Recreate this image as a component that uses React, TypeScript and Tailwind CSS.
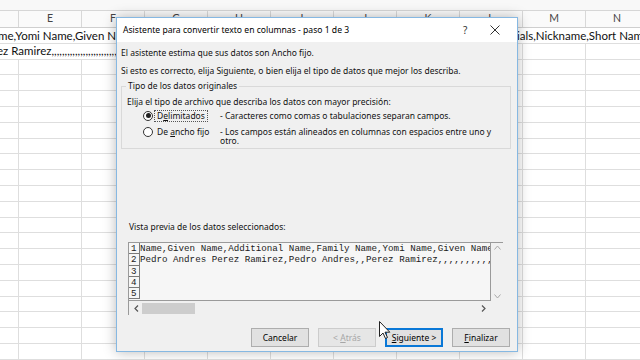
import React from "react";

const cols = ["D", "E", "F", "G", "H", "I", "J", "K", "L", "M", "N"];
const colW = [19, 63, 63, 63, 63, 63, 63, 63, 63, 63, 63];
const sheetFont = { fontFamily: "Lato, 'Open Sans', sans-serif" };
const uiFont = { fontFamily: "'Noto Sans', 'Open Sans', sans-serif" };
const monoFont = { fontFamily: "'Liberation Mono', 'DejaVu Sans Mono', monospace" };

function Sheet() {
  const rows = Array.from({ length: 21 });
  return (
    <div className="flex flex-col w-[640px] h-[360px] overflow-hidden bg-white" style={sheetFont}>
      <div className="h-[11px] shrink-0 bg-[#f8f8f8] border-b border-[#d6d6d6]" />
      <div className="flex h-[17px] shrink-0 border-b border-[#cfcfcf] bg-[#fafafa]">
        {cols.map((c, i) => (
          <div
            key={c}
            style={{ width: colW[i] }}
            className="shrink-0 border-r border-[#d8d8d8] flex items-center justify-center text-[10.5px] text-[#444]"
          >
            {i === 0 ? "" : c}
          </div>
        ))}
      </div>
      {rows.map((_, r) => (
        <div key={r} className="flex h-[15.8px] shrink-0 border-b border-[#dedede] text-[11.5px] text-[#111]">
          {cols.map((c, i) => {
            const noLine = r === 0 || (r === 1 && i < 8);
            return (
              <div
                key={c}
                style={{ width: colW[i] }}
                className={`shrink-0 flex items-center whitespace-nowrap overflow-visible leading-none ${noLine ? "" : "border-r border-[#dedede]"}`}
              >
                {r === 0 && i === 0 && <span className="-ml-[2px]">me,Yomi Name,Given Name Yomi,Additional Name Yomi</span>}
                {r === 1 && i === 0 && <span className="-ml-[3px]">ez Ramirez,,,,,,,,,,,,,,,,,,,,,,,,,,,,,,,,,,,,,,,,,,,,</span>}
                {r === 0 && i === 8 && <span className="pl-[57px]">ials,Nickname,Short Name,Maiden Name</span>}
              </div>
            );
          })}
        </div>
      ))}
    </div>
  );
}

function Radio({ checked }: { checked?: boolean }) {
  return (
    <span className="w-[10px] h-[10px] rounded-full border border-[#333] bg-white flex items-center justify-center shrink-0">
      {checked && <span className="w-[5px] h-[5px] rounded-full bg-[#222]" />}
    </span>
  );
}

function Btn({ children, kind }: { children: React.ReactNode; kind?: "focus" | "disabled" }) {
  const cls =
    kind === "focus"
      ? "border-[2px] border-[#0a78d7] text-black"
      : kind === "disabled"
      ? "border border-[#cccccc] text-[#a6a6a6] bg-[#e6e6e6]"
      : "border border-[#adadad] text-black";
  return (
    <div className={`w-[58px] h-[19px] bg-[#e1e1e1] flex items-center justify-center text-[8.5px] whitespace-pre ${cls}`}>
      {children}
    </div>
  );
}

function Dialog() {
  return (
    <div
      className="absolute left-[116px] top-[17px] w-[402px] h-[335px] border border-[#86b8e2] bg-[#f0f0f0] shadow-[0_0_12px_rgba(0,0,0,0.28)] flex flex-col text-[#111]"
      style={uiFont}
    >
      <div className="h-[24px] shrink-0 bg-white flex items-center pl-[6px] text-[8.6px] text-black">
        <span className="flex-1">Asistente para convertir texto en columnas - paso 1 de 3</span>
        <span className="w-[10px] text-[10px] text-[#333]">?</span>
        <span className="w-[44px] flex justify-center">
          <svg width="10" height="10" viewBox="0 0 10 10">
            <path d="M0.5 0.5 L9.5 9.5 M9.5 0.5 L0.5 9.5" stroke="#333" strokeWidth="1" fill="none" />
          </svg>
        </span>
      </div>
      <div className="flex-1 flex flex-col pl-[4px] pr-[6px] pt-[5px] text-[8.5px] leading-[12px]">
        <div>El asistente estima que sus datos son Ancho fijo.</div>
        <div className="mt-[6px]">Si esto es correcto, elija Siguiente, o bien elija el tipo de datos que mejor los describa.</div>
        <div className="mt-[9px] h-[63px] border border-[#d9d9d9] flex flex-col">
          <div className="-mt-[7px] ml-[4px] self-start px-[2px] bg-[#f0f0f0]">Tipo de los datos originales</div>
          <div className="ml-[5px] mt-[4px]">Elija el tipo de archivo que describa los datos con mayor precisión:</div>
          <div className="flex items-center mt-[1px] h-[13px]">
            <div className="w-[98px] flex items-center pl-[21px] shrink-0">
              <Radio checked />
              <span className="ml-[1px] px-[2px] border border-dotted border-[#555] leading-[10px]">
                D<span className="underline">e</span>limitados
              </span>
            </div>
            <span>- Caracteres como comas o tabulaciones separan campos.</span>
          </div>
          <div className="flex items-start mt-[4px]">
            <div className="w-[98px] flex items-center pl-[21px] shrink-0 h-[12px]">
              <Radio />
              <span className="ml-[4px]">
                De <span className="underline">a</span>ncho fijo
              </span>
            </div>
            <span className="leading-[9px] pt-[1px]">- Los campos están alineados en columnas con espacios entre uno y otro.</span>
          </div>
        </div>
        <div className="mt-[72px] ml-[8px]">Vista previa de los datos seleccionados:</div>
        <div className="mt-[9px] ml-[7px] w-[375px] h-[73px] border-t border-l border-[#9a9a9a] flex flex-col">
          <div className="flex h-[58px]">
            <div className="w-[362px] h-[58px] bg-[#f6f6f6] border-r border-b border-[#9a9a9a] flex overflow-hidden text-[9.2px] leading-[11.3px]" style={monoFont}>
              <div className="w-[11px] shrink-0 flex flex-col">
                {[1, 2, 3, 4, 5].map((n) => (
                  <div key={n} className="h-[11.3px] border-r border-b border-[#7a7a7a] pl-[2px] text-[#222]">
                    {n}
                  </div>
                ))}
              </div>
              <div className="flex flex-col whitespace-nowrap text-[#1a1a1a]">
                <div>Name,Given Name,Additional Name,Family Name,Yomi Name,Given Name Yomi,Additional</div>
                <div>Pedro Andres Perez Ramirez,Pedro Andres,,Perez Ramirez,,,,,,,,,,,,,,,,,,,,,,</div>
              </div>
            </div>
            <div className="flex-1 flex flex-col items-center justify-between py-[2px]">
              <svg width="7" height="5" viewBox="0 0 7 5"><path d="M0.5 4.5 L3.5 1 L6.5 4.5" stroke="#a8a8a8" fill="none" /></svg>
              <svg width="7" height="5" viewBox="0 0 7 5"><path d="M0.5 0.5 L3.5 4 L6.5 0.5" stroke="#a8a8a8" fill="none" /></svg>
            </div>
          </div>
          <div className="flex-1 flex items-center pl-[5px] pr-[17px]">
            <svg width="5" height="7" viewBox="0 0 5 7"><path d="M4 0.5 L1 3.5 L4 6.5" stroke="#555" strokeWidth="1.2" fill="none" /></svg>
            <div className="ml-[3px] w-[53px] h-[11px] bg-[#cdcdcd]" />
            <div className="flex-1" />
            <svg width="5" height="7" viewBox="0 0 5 7"><path d="M1 0.5 L4 3.5 L1 6.5" stroke="#555" strokeWidth="1.2" fill="none" /></svg>
          </div>
        </div>
        <div className="mt-[13px] flex justify-end gap-[9px] pr-[1px]">
          <Btn>Cancelar</Btn>
          <Btn kind="disabled">
            {"< "}
            <span className="underline">A</span>trás
          </Btn>
          <Btn kind="focus">
            <span className="underline">S</span>
            {"iguiente >"}
          </Btn>
          <Btn>
            <span className="underline">F</span>inalizar
          </Btn>
        </div>
      </div>
    </div>
  );
}

export default function App() {
  return (
    <div className="relative w-[640px] h-[360px] overflow-hidden">
      <Sheet />
      <Dialog />
      <svg className="absolute left-[379px] top-[321px]" width="12" height="19" viewBox="0 0 12 19">
        <path d="M0.5 0.5 L0.5 15.5 L4 12 L6.5 17.5 L8.5 16.5 L6 11.2 L10.8 11.2 Z" fill="#fff" stroke="#222" strokeWidth="1" strokeLinejoin="round" />
      </svg>
    </div>
  );
}
